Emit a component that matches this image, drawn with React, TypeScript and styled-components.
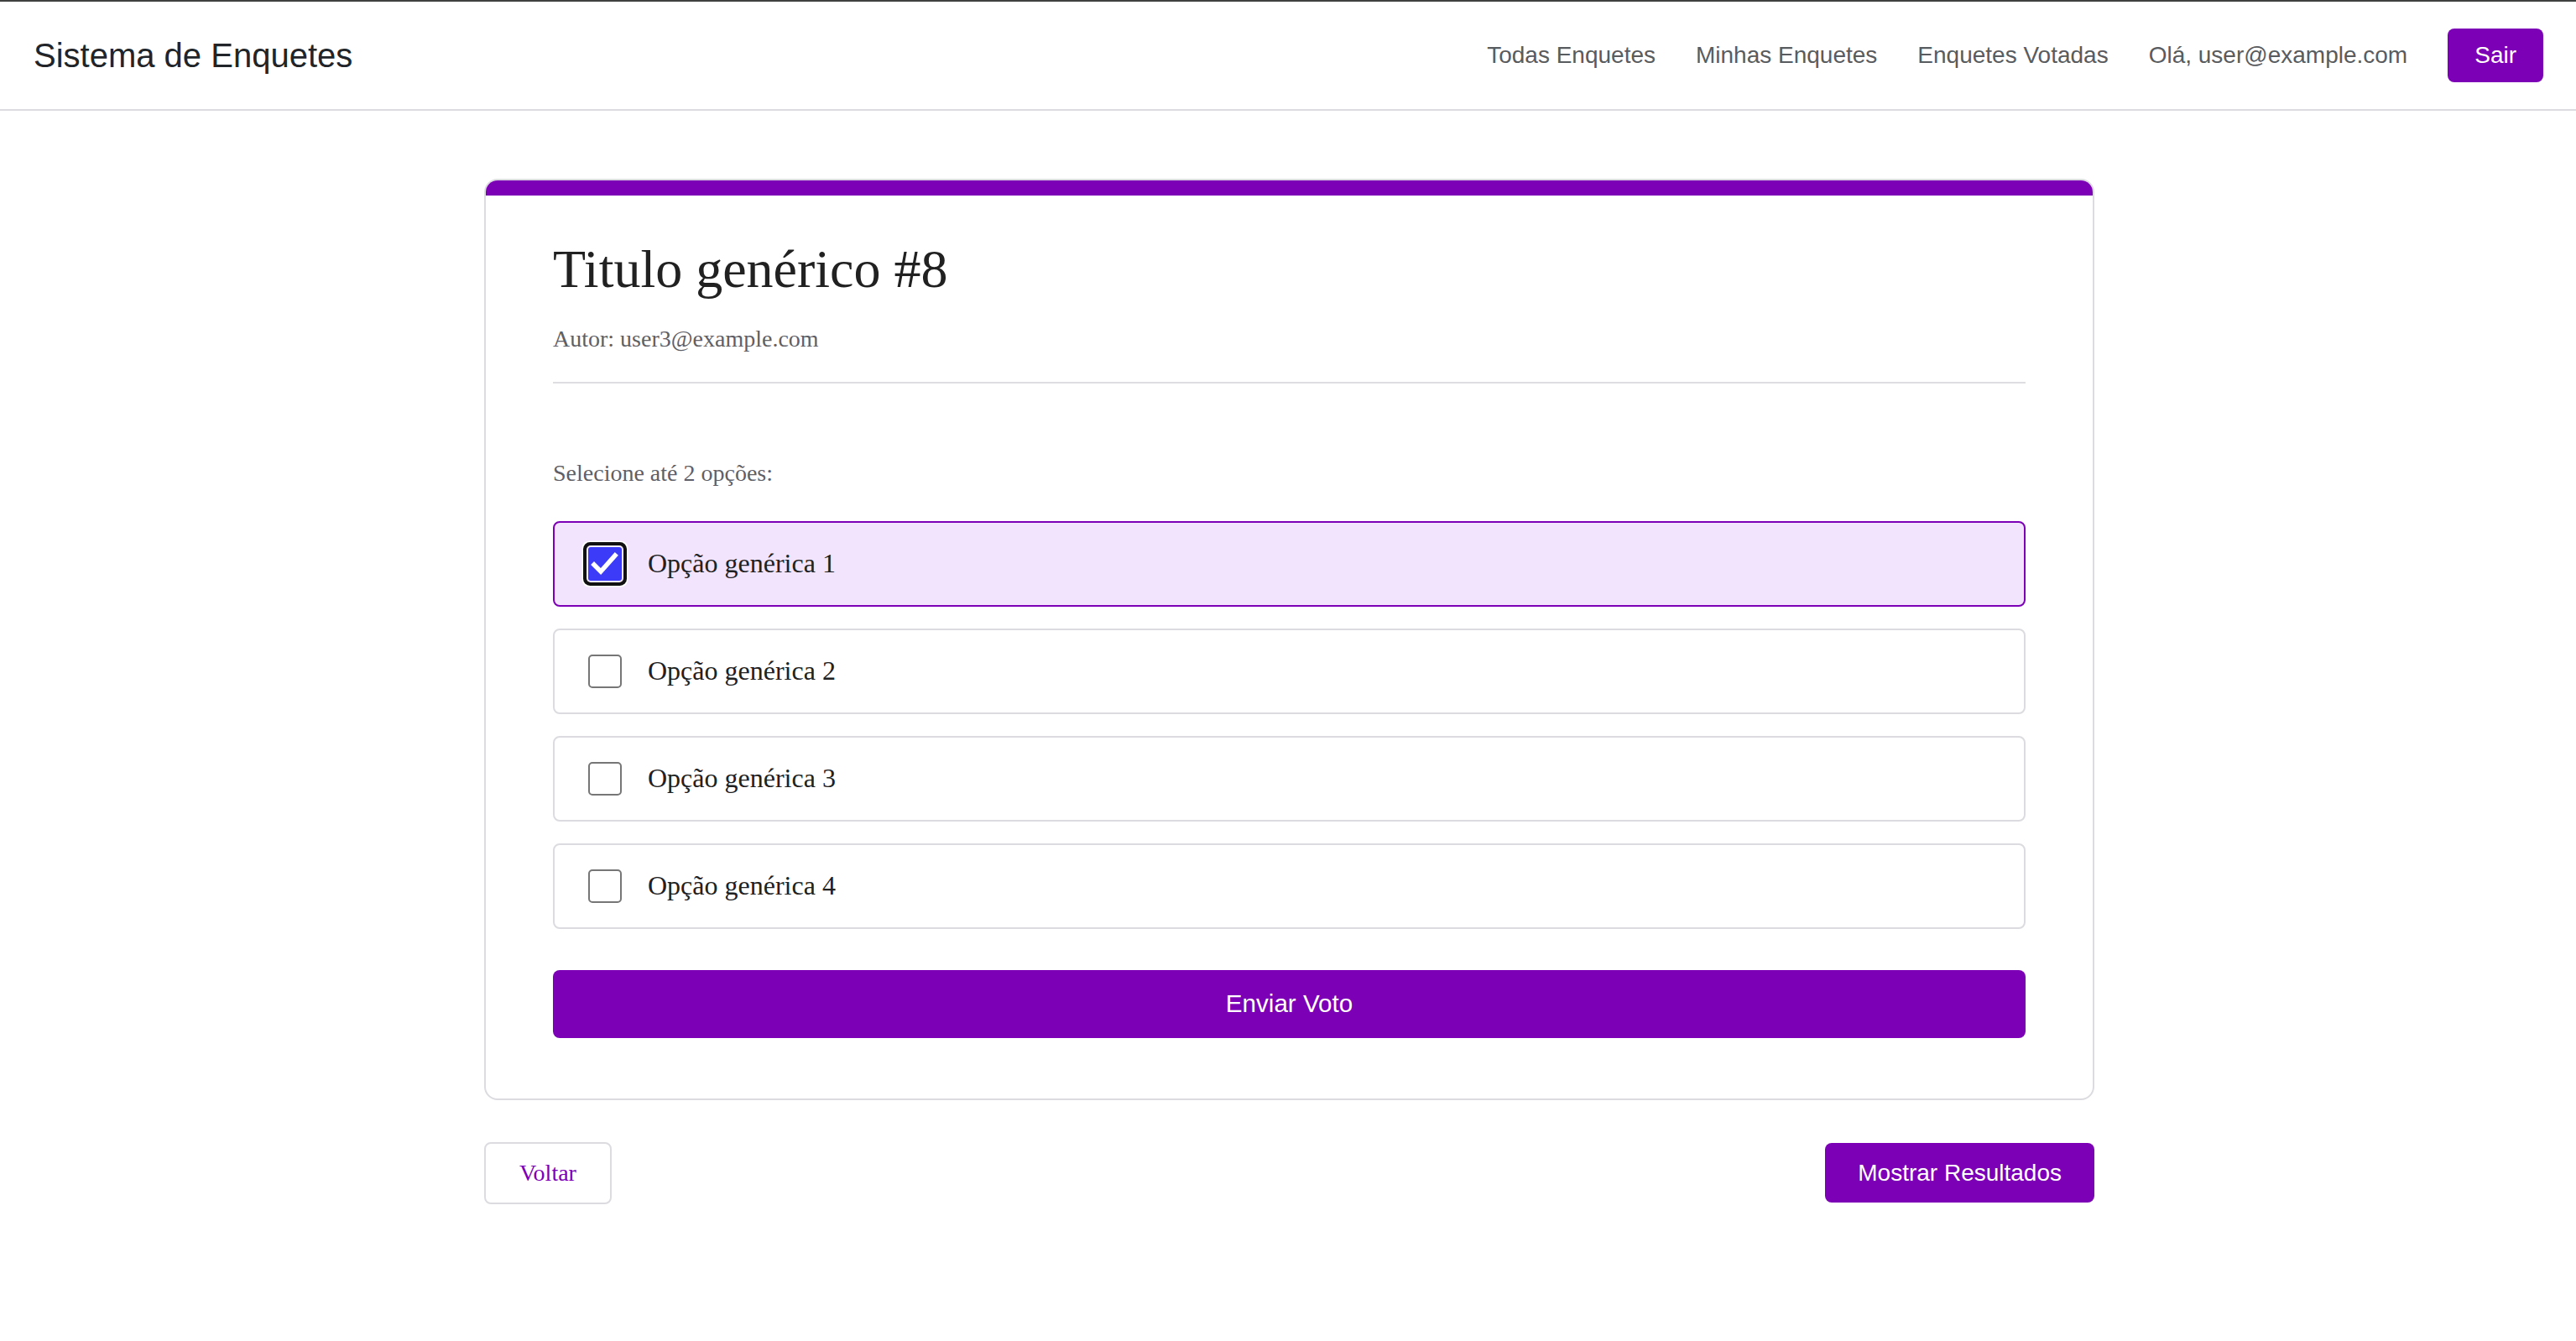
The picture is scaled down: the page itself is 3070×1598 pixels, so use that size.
import styled, { createGlobalStyle } from "styled-components";

const PURPLE = "#7c00b5";

const GlobalStyle = createGlobalStyle`
  * { box-sizing: border-box; }
  body {
    margin: 0;
    background: #ffffff;
    font-family: "Liberation Serif", "Times New Roman", serif;
    color: #212121;
  }
`;

const options = [
  { id: 1, label: "Opção genérica 1", checked: true },
  { id: 2, label: "Opção genérica 2", checked: false },
  { id: 3, label: "Opção genérica 3", checked: false },
  { id: 4, label: "Opção genérica 4", checked: false },
];

const App = () => {
  return (
    <>
      <GlobalStyle />
      <HeaderRoot>
        <Brand>Sistema de Enquetes</Brand>
        <Nav>
          <NavLink>Todas Enquetes</NavLink>
          <NavLink>Minhas Enquetes</NavLink>
          <NavLink>Enquetes Votadas</NavLink>
          <NavLink>Olá, user@example.com</NavLink>
          <SolidButton $size="nav">Sair</SolidButton>
        </Nav>
      </HeaderRoot>

      <Main>
        <Card>
          <CardBar />
          <CardBody>
            <Title>Titulo genérico #8</Title>
            <Author>Autor: user3@example.com</Author>
            <Divider />
            <Instruction>Selecione até 2 opções:</Instruction>
            <OptionList>
              {options.map((o) => (
                <OptionRow key={o.id} $checked={o.checked}>
                  <CheckBox $checked={o.checked}>
                    {o.checked && (
                      <svg width="40" height="40" viewBox="0 0 40 40">
                        <path
                          d="M7 21 L15 29 L32 10"
                          fill="none"
                          stroke="#fff"
                          strokeWidth="5.5"
                          strokeLinecap="square"
                        />
                      </svg>
                    )}
                  </CheckBox>
                  <OptionText>{o.label}</OptionText>
                </OptionRow>
              ))}
            </OptionList>
            <SubmitButton>Enviar Voto</SubmitButton>
          </CardBody>
        </Card>

        <BottomRow>
          <OutlineButton>Voltar</OutlineButton>
          <SolidButton $size="action">Mostrar Resultados</SolidButton>
        </BottomRow>
      </Main>
    </>
  );
};

const HeaderRoot = styled.header`
  display: flex;
  align-items: center;
  justify-content: space-between;
  padding: 32px 39px 32px 40px;
  border-top: 2px solid #3f4140;
  border-bottom: 2px solid #dcdce0;
  font-family: "Liberation Sans", Arial, sans-serif;
`;

const Brand = styled.div`
  font-size: 40px;
  line-height: 1;
  color: #212529;
`;

const Nav = styled.nav`
  display: flex;
  align-items: center;
  gap: 48px;
`;

const NavLink = styled.span`
  font-size: 28px;
  color: #595c5f;
  cursor: pointer;
`;

const SolidButton = styled.button<{ $size: "nav" | "action" }>`
  border: 0;
  border-radius: 8px;
  background: ${PURPLE};
  color: #ffffff;
  font-family: "Liberation Sans", Arial, sans-serif;
  font-size: 28px;
  line-height: 42px;
  padding: ${({ $size }) => ($size === "nav" ? "11px 32px" : "14.5px 39px")};
  cursor: pointer;
`;

const Main = styled.main`
  width: 1919px;
  margin: 81px 0 0 calc(50% - 958px);
`;

const Card = styled.section`
  border: 2px solid #dcdce0;
  border-radius: 16px;
  overflow: hidden;
  background: #ffffff;
`;

const CardBar = styled.div`
  height: 18px;
  background: ${PURPLE};
`;

const CardBody = styled.div`
  padding: 50px 80px 72px;
`;

const Title = styled.h1`
  margin: 0;
  font-size: 64px;
  font-weight: 400;
  line-height: 1.2;
  color: #212121;
`;

const Author = styled.p`
  margin: 23px 0 0;
  font-size: 28px;
  line-height: 42px;
  color: #5f6066;
`;

const Divider = styled.hr`
  margin: 30px 0 0;
  border: 0;
  border-top: 2px solid #dedee2;
`;

const Instruction = styled.p`
  margin: 86px 0 0;
  font-size: 28px;
  line-height: 42px;
  color: #5f6066;
`;

const OptionList = styled.div`
  margin-top: 36px;
  display: flex;
  flex-direction: column;
  gap: 26px;
`;

const OptionRow = styled.label<{ $checked: boolean }>`
  display: flex;
  align-items: center;
  gap: 31px;
  height: 102px;
  padding: 0 40px;
  border: 2px solid ${({ $checked }) => ($checked ? PURPLE : "#dcdce0")};
  border-radius: 8px;
  background: ${({ $checked }) => ($checked ? "#f3e4fd" : "#ffffff")};
  cursor: pointer;
`;

const CheckBox = styled.span<{ $checked: boolean }>`
  flex: none;
  width: 40px;
  height: 40px;
  display: flex;
  border-radius: ${({ $checked }) => ($checked ? "3px" : "5px")};
  background: ${({ $checked }) => ($checked ? "#3b3bf8" : "#ffffff")};
  border: ${({ $checked }) => ($checked ? "0" : "2px solid #767676")};
  box-shadow: ${({ $checked }) =>
    $checked ? "0 0 0 2px #f6eefd, 0 0 0 6px #111111, 0 0 0 7.5px #ffffff" : "none"};
`;

const OptionText = styled.span`
  font-size: 32px;
  color: #212121;
`;

const SubmitButton = styled.button`
  display: block;
  width: 100%;
  height: 81px;
  margin-top: 49px;
  border: 0;
  border-radius: 8px;
  background: ${PURPLE};
  color: #ffffff;
  font-family: "Liberation Sans", Arial, sans-serif;
  font-size: 29.6px;
  cursor: pointer;
`;

const BottomRow = styled.div`
  display: flex;
  align-items: center;
  justify-content: space-between;
  margin-top: 50px;
`;

const OutlineButton = styled.button`
  border: 2px solid #dcdce0;
  border-radius: 8px;
  background: #ffffff;
  color: ${PURPLE};
  font-family: "Liberation Serif", "Times New Roman", serif;
  font-size: 28px;
  line-height: 42px;
  padding: 14px 40px;
  cursor: pointer;
`;

export default App;
